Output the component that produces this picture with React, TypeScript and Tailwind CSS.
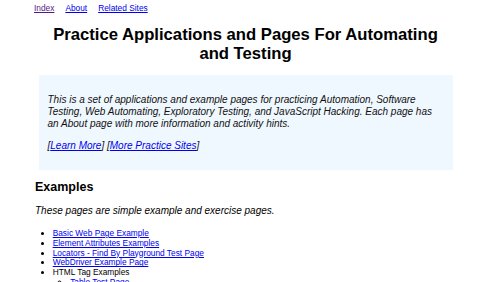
import React from "react";

export default function App() {
  const items = [
    "Basic Web Page Example",
    "Element Attributes Examples",
    "Locators - Find By Playground Test Page",
    "WebDriver Example Page",
  ];
  return (
    <div
      className="w-[500px] h-[282px] overflow-hidden bg-white text-black"
      style={{ fontFamily: '"Liberation Sans", Arial, sans-serif' }}
    >
      <div className="ml-[34px] w-[423px] pt-[4px]">
        <nav className="flex gap-[11px] text-[8.33px] leading-[9.6px]">
          <a href="#" className="underline text-[#551a8b]">Index</a>
          <a href="#" className="underline text-[#0000ee]">About</a>
          <a href="#" className="underline text-[#0000ee]">Related Sites</a>
        </nav>
        <h1 className="mt-[11px] mx-[12px] text-center text-[16.67px] leading-[19.2px] font-bold">
          Practice Applications and Pages For Automating and Testing
        </h1>
        <div className="mt-[12px] ml-[5px] mr-[4px] bg-[#f0f8ff] px-[8.5px] py-[8.5px] italic text-[10px] leading-[12px] text-[#111]">
          <p className="my-[10px]">
            This is a set of applications and example pages for practicing Automation, Software
            Testing, Web Automating, Exploratory Testing, and JavaScript Hacking. Each page has an
            About page with more information and activity hints.
          </p>
          <p className="my-[10px]">
            [<a href="#" className="underline text-[#0000ee]">Learn More</a>] [
            <a href="#" className="underline text-[#0000ee]">More Practice Sites</a>]
          </p>
        </div>
        <h2 className="mt-[10px] ml-[1px] text-[12.5px] leading-[14.4px] font-bold">Examples</h2>
        <p className="mt-[11px] ml-[1px] italic text-[10px] leading-[11.5px]">
          These pages are simple example and exercise pages.
        </p>
        <ul className="mt-[12px] list-disc pl-[18.7px] text-[8.33px] leading-[9.8px]">
          {items.map((t) => (
            <li key={t}>
              <a href="#" className="underline text-[#0000ee]">{t}</a>
            </li>
          ))}
          <li>
            HTML Tag Examples
            <ul className="list-[circle] pl-[17.5px]">
              <li>
                <a href="#" className="underline text-[#0000ee]">Table Test Page</a>
              </li>
              <li>
                <a href="#" className="underline text-[#0000ee]">Tag Examples</a>
              </li>
            </ul>
          </li>
        </ul>
      </div>
    </div>
  );
}
